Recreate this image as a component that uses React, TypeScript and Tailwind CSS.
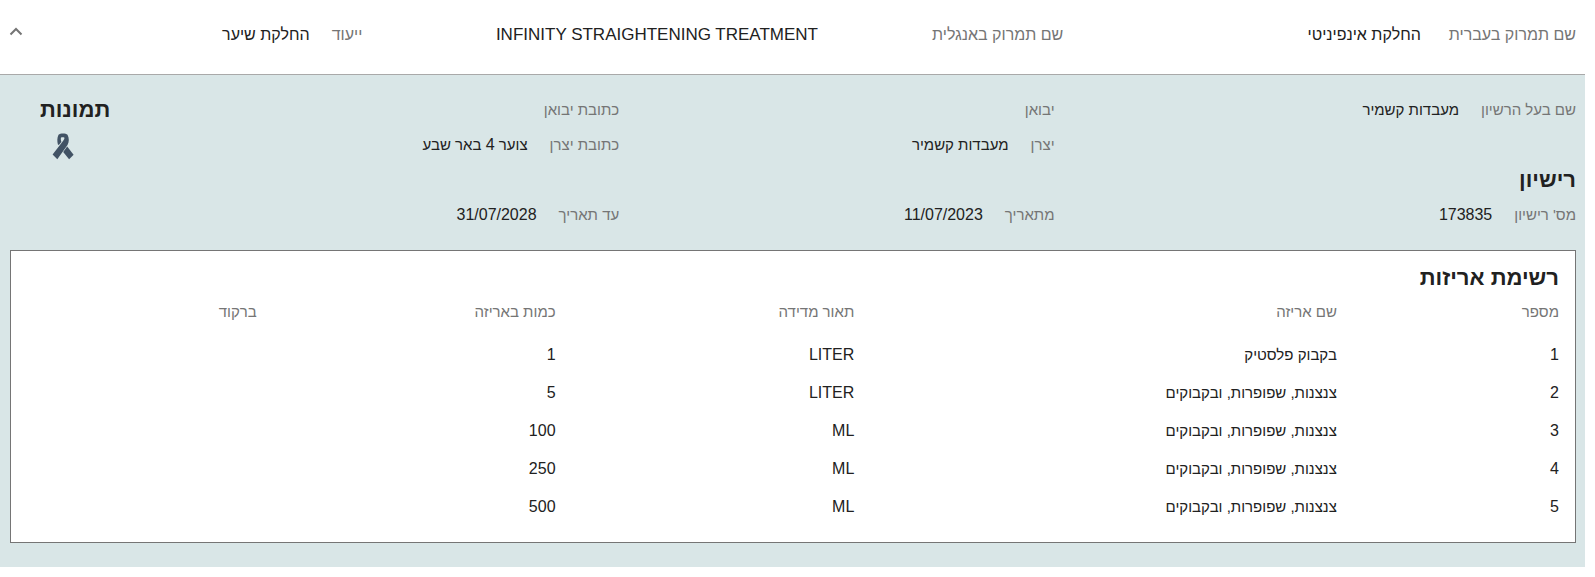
import { useState } from "react";

type FieldProps = { label: string; value?: string };

const hebrew = /[\u0590-\u05ff]/;

/* Digits inside Hebrew text are set one step larger than the letters. */
function Mixed({ text }: { text: string }) {
  if (!hebrew.test(text)) return <>{text}</>;
  return (
    <>
      {text.split(/(\d+)/).map((part, i) =>
        /\d/.test(part) ? (
          <span key={i} className="text-base leading-6">
            {part}
          </span>
        ) : (
          part
        ),
      )}
    </>
  );
}

function valueSize(text: string) {
  return hebrew.test(text) ? "text-[15px] leading-6" : "text-base leading-6";
}

function Field({ label, value }: FieldProps) {
  return (
    <dl className="flex gap-[22px]">
      <dt className="text-[15px] leading-6 text-[#757575]">{label}</dt>
      {value && (
        <dd className={valueSize(value)}>
          <Mixed text={value} />
        </dd>
      )}
    </dl>
  );
}

const columns = ["מספר", "שם אריזה", "תאור מדידה", "כמות באריזה", "ברקוד"];

const packages = [
  ["1", "בקבוק פלסטיק", "LITER", "1", ""],
  ["2", "צנצנות, שפופרות, ובקבוקים", "LITER", "5", ""],
  ["3", "צנצנות, שפופרות, ובקבוקים", "ML", "100", ""],
  ["4", "צנצנות, שפופרות, ובקבוקים", "ML", "250", ""],
  ["5", "צנצנות, שפופרות, ובקבוקים", "ML", "500", ""],
];

function RibbonIcon() {
  return (
    <svg width="22" height="28" viewBox="0 0 22 28" aria-hidden="true">
      <path
        fill="#425365"
        d="M5.900 12.400C5 9.500 5.100 5.500 6.500 2.800C8.200 1 13.800 1 15.500 2.800C17.200 6 17.300 10 15.500 13L5.300 27.200L0.600 22.600L9.700 10.800C11.400 8.600 12.400 7.400 12.500 5.700C11.200 5.200 9.800 5.300 8.900 5.700C8.700 7.500 8.900 8.800 9.400 9.900L6.800 13Z"
      />
      <path fill="#425365" d="M15.200 14.600L21.600 22.700L17.100 27.200L11.200 20Z" />
    </svg>
  );
}

export default function App() {
  const [open, setOpen] = useState(true);

  return (
    <main
      dir="rtl"
      className="bg-white pr-[10px] text-base leading-6 text-[#212121] [font-family:'Liberation_Sans',Arial,sans-serif]"
    >
      <header className="flex h-[75px] items-start border-b border-[#a9a9a9] pt-[23px] pr-[9px] pl-2">
        <dl className="flex w-[32.7%] gap-7">
          <dt className="text-[#757575]">שם תמרוק בעברית</dt>
          <dd>החלקת אינפיניטי</dd>
        </dl>
        <dl className="flex w-[44.7%]">
          <dt className="w-[35%] text-[#757575]">שם תמרוק באנגלית</dt>
          <dd className="text-[17px] whitespace-nowrap" dir="ltr">
            INFINITY STRAIGHTENING TREATMENT
          </dd>
        </dl>
        <dl className="flex flex-1 gap-[22px]">
          <dt className="text-[#757575]">ייעוד</dt>
          <dd>החלקת שיער</dd>
        </dl>
        <button
          type="button"
          aria-label="פרטי תמרוק"
          aria-expanded={open}
          onClick={() => setOpen(!open)}
          className="flex h-4 w-4 items-center justify-center"
        >
          <svg
            width="14"
            height="9"
            viewBox="0 0 14 9"
            fill="none"
            stroke="#757575"
            strokeWidth="2"
            className={open ? "" : "rotate-180"}
          >
            <path d="M1.500 7.500L7 2L12.500 7.500" />
          </svg>
        </button>
      </header>

      {open && (
        <section className="bg-[#d9e6e7] pt-[23px] pr-[9px] pb-6 pl-[10px]">
          <div className="grid auto-rows-[35px] grid-cols-[33.3%_27.8%_32.5%_1fr]">
            <Field label="שם בעל הרשיון" value="מעבדות קשמיר" />
            <Field label="יבואן" />
            <Field label="כתובת יבואן" />
            <div className="row-span-2">
              <h2 className="text-[22px] leading-6 font-bold">תמונות</h2>
              <button type="button" aria-label="תמונות" className="mt-2.5 mr-9 block">
                <RibbonIcon />
              </button>
            </div>
            <div />
            <Field label="יצרן" value="מעבדות קשמיר" />
            <Field label="כתובת יצרן" value="צוער 4 באר שבע" />
            <h2 className="col-span-4 text-[22px] leading-6 font-bold">רישיון</h2>
            <Field label="מס' רישיון" value="173835" />
            <Field label="מתאריך" value="11/07/2023" />
            <Field label="עד תאריך" value="31/07/2028" />
          </div>

          <div className="mt-3 border border-[#757575] bg-white px-4 pt-[15px] pb-4">
            <h2 className="text-[22px] leading-6 font-bold">רשימת אריזות</h2>
            <table className="mt-[3px] w-full table-fixed text-right">
              <colgroup>
                <col className="w-[14.5%]" />
                <col className="w-[31.5%]" />
                <col className="w-[19.5%]" />
                <col className="w-[19.5%]" />
                <col className="w-[15%]" />
              </colgroup>
              <thead>
                <tr className="h-[43px] align-top text-[15px] leading-6 text-[#757575]">
                  {columns.map((title) => (
                    <th key={title} scope="col" className="pt-[7px] font-normal">
                      {title}
                    </th>
                  ))}
                </tr>
              </thead>
              <tbody>
                {packages.map((row) => (
                  <tr key={row[0]} className="h-[38px]">
                    {row.map((cell, i) => (
                      <td key={i} className={valueSize(cell)}>
                        {cell}
                      </td>
                    ))}
                  </tr>
                ))}
              </tbody>
            </table>
          </div>
        </section>
      )}
    </main>
  );
}
